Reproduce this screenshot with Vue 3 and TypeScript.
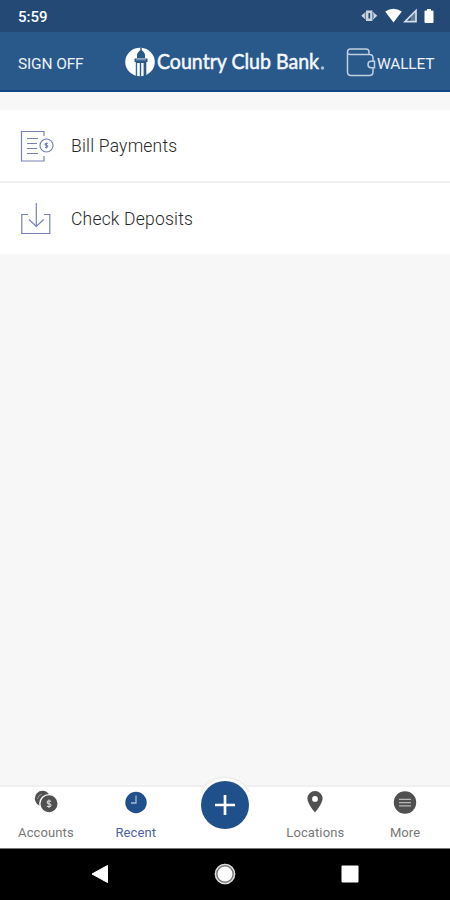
<script setup lang="ts">
import { ref } from 'vue'

type Tab = 'accounts' | 'recent' | 'locations' | 'more'
const activeTab = ref<Tab>('recent')
</script>

<template>
  <div class="screen">
    <div class="status">
      <span class="time">5:59</span>
      <svg class="status-icons" width="78" height="18" viewBox="0 0 78 18">
        <path d="M5 2.500h6.500v10.500H5zM4.500 4L.2 7.700l4.300 3.800zM12 4l4.300 3.700L12 11.500z" fill="#cbd5e0" />
        <path d="M8.300 5v5.500" stroke="#234974" stroke-width="1.700" />
        <path d="M4.300 5.500v4.500M12.300 5.500v4.500" stroke="#607b9b" stroke-width=".8" />
        <path d="M24.200 3.400Q32.500 -2 40.800 3.400L32.500 14.500z" fill="#fff" />
        <path d="M44 13.700L55 2.500v11.200z" fill="none" stroke="#d5dde7" stroke-width="1.700" />
        <path d="M49.500 13.500V8L55 2.500v11z" fill="#d5dde7" opacity=".35" />
        <path d="M66 1h4v1.500h1.500q1 0 1 1v10.500q0 1-1 1h-7q-1 0-1-1V3.500q0-1 1-1H66z" fill="#fff" />
      </svg>
    </div>

    <header class="header">
      <span class="sign-off">SIGN OFF</span>
      <svg class="logo" width="204" height="34" viewBox="0 0 204 34">
        <ellipse cx="17" cy="17" rx="14.800" ry="14.300" fill="#fff" />
        <path d="M18 3v4" stroke="#29588b" stroke-width="1.500" />
        <path d="M14 13v-2.500q0-3.500 4-5.500q4 2 4 5.500V13z" fill="#29588b" />
        <path d="M11.500 13.500h13V17h-1.200v14h-2.700V18h-1.800v13.400h-2V18h-2v13.400h-2V17h-1.300z" fill="#29588b" />
        <path d="M14.500 18v13M18.700 18v13" stroke="#dfe8f1" stroke-width="1.200" />
        <path d="M13 14.800h10" stroke="#a9bfd6" stroke-width=".8" />
        <text class="wordmark" x="34" y="23.500" textLength="162" lengthAdjust="spacingAndGlyphs">Country Club Bank</text>
        <circle cx="199.500" cy="23" r="1.700" fill="#adc0d6" />
      </svg>
      <div class="wallet">
        <svg width="30" height="30" viewBox="0 0 30 30" fill="none" stroke="#c0cfdf" stroke-width="1.500">
          <path d="M23 6.500V4q0-3-3-3H4.500Q1.500 1 1.500 4v20q0 3.500 3.500 3.500h18.500q3.500 0 3.500-3.500v-4M1.500 4.500q0 2 3 2h19q3.500 0 3.500 3.500v3" />
          <path d="M28.500 13.300h-3.500q-3 0-3 3.200t3 3.200h3.500z" />
        </svg>
        <span class="wallet-label">WALLET</span>
      </div>
    </header>

    <main class="content">
      <div class="row">
        <svg width="36" height="34" viewBox="0 0 36 34" fill="none" stroke="#7783b2" stroke-width="1.200">
          <path d="M25 7V2.500H2.500v29.500H25V27" />
          <path d="M8 9.500h11M8 14.500h10M8 19.500h10M8 24.500h11" />
          <circle cx="27.500" cy="16.500" r="6.500" />
          <path d="M28.800 14.300h-1.500q-1.300 0-1.300 1t1.300 1h.2q1.300 0 1.300 1t-1.300 1.200H26M27.400 13.500v6" />
        </svg>
        <span class="row-label bills">Bill Payments</span>
      </div>
      <div class="row">
        <svg width="36" height="34" viewBox="0 0 36 34" fill="none" stroke="#7783b2" stroke-width="1.200">
          <path d="M9 12.500H2.800v19h28v-19H25" />
          <path d="M17.300 1v23.500M10 17.500l7.300 7 7.300-7" />
        </svg>
        <span class="row-label checks">Check Deposits</span>
      </div>
    </main>

    <nav class="tabs">
      <div class="tab" :class="{ active: activeTab === 'accounts' }" @click="activeTab = 'accounts'">
        <svg width="26" height="24" viewBox="0 0 26 24">
          <circle cx="9.500" cy="8.500" r="7.700" fill="#505050" />
          <path d="M4.500 9q.4-4 4.500-4.800" fill="none" stroke="#999" stroke-width="1" />
          <circle cx="16" cy="13.800" r="9.900" fill="#fff" />
          <circle cx="16" cy="13.800" r="8.500" fill="#505050" />
          <path d="M18 11.700q-.8-.9-2-.9-1.800 0-1.800 1.400t1.800 1.500q2 .1 2 1.600t-2 1.500q-1.300 0-2.100-.9M16 9.500v8.600" fill="none" stroke="#ddd" stroke-width="1.100" />
        </svg>
        <span class="tab-label accounts">Accounts</span>
      </div>
      <div class="tab" :class="{ active: activeTab === 'recent' }" @click="activeTab = 'recent'">
        <svg width="26" height="24" viewBox="0 0 26 24">
          <circle cx="13" cy="12.500" r="10.700" fill="#20508b" />
          <path d="M13 5.500v7.500H8" fill="none" stroke="#a7bad2" stroke-width="1.300" />
        </svg>
        <span class="tab-label recent">Recent</span>
      </div>
      <div class="tab add">
        <svg width="60" height="60" viewBox="0 0 60 60">
          <path d="M6 16.500A27.300 27.300 0 0 1 54 16.500" fill="#fff" stroke="#ececec" stroke-width="1.500" />
          <circle cx="30" cy="30" r="26.500" fill="#fff" />
          <circle cx="30" cy="30" r="24" fill="#20508b" />
          <path d="M20 30h20M30 20v20" stroke="#fff" stroke-width="2.700" />
        </svg>
      </div>
      <div class="tab" :class="{ active: activeTab === 'locations' }" @click="activeTab = 'locations'">
        <svg width="26" height="24" viewBox="0 0 26 24">
          <path fill-rule="evenodd" d="M13 1a7.600 7.600 0 0 0-7.600 7.600c0 5 7.600 14 7.600 14s7.600-9 7.600-14A7.600 7.600 0 0 0 13 1zm0 5a2.900 2.900 0 1 1 0 5.800A2.900 2.900 0 0 1 13 6z" fill="#505050" />
        </svg>
        <span class="tab-label locations">Locations</span>
      </div>
      <div class="tab" :class="{ active: activeTab === 'more' }" @click="activeTab = 'more'">
        <svg width="26" height="24" viewBox="0 0 26 24">
          <circle cx="13" cy="12.500" r="11.200" fill="#505050" />
          <path d="M7 9.300h12M7 12.700h12M7 15.900h12" stroke="#b8b8b8" stroke-width="1.300" />
        </svg>
        <span class="tab-label more">More</span>
      </div>
    </nav>

    <div class="system">
      <svg width="20" height="24" viewBox="0 0 20 24"><path d="M17.500 3.500v17L2 12z" fill="#fff" stroke="#fff" stroke-linejoin="round" /></svg>
      <svg width="24" height="24" viewBox="0 0 24 24">
        <circle cx="12" cy="12" r="10.300" fill="#777" />
        <circle cx="12" cy="12" r="9.600" fill="none" stroke="#ddd" stroke-width="1.400" />
        <circle cx="12" cy="12" r="7.500" fill="#fff" />
      </svg>
      <svg width="20" height="24" viewBox="0 0 20 24"><rect x="1.500" y="3.500" width="17" height="17" rx="1" fill="#fff" /></svg>
    </div>
  </div>
</template>

<style>
body { background: #f7f7f7; }
</style>

<style scoped>
.screen {
  display: flex;
  flex-direction: column;
  width: 450px;
  height: 900px;
  overflow: hidden;
  background: #f7f7f7;
  font-family: Roboto, sans-serif;
  color: #292929;
}
svg { display: block; flex: none; }
.status {
  display: flex;
  flex: none;
  box-sizing: border-box;
  justify-content: space-between;
  height: 32px;
  padding: 8px 11px 0 18px;
  background: #234974;
}
.time {
  color: #fff;
  font-size: 15px;
  line-height: 18px;
  font-weight: 500;
}
.header {
  display: grid;
  flex: none;
  box-sizing: border-box;
  grid-template-columns: 105px 204px 1fr;
  height: 60px;
  padding: 0 0 0 18px;
  border-bottom: 2px solid #114482;
  background: #29588b;
  color: #edf2f7;
}
.sign-off {
  padding-top: 22px;
  font-size: 15.500px;
  line-height: 20px;
  letter-spacing: -.15px;
}
.logo { margin-top: 13px; }
.wordmark {
  fill: #f5f8fb;
  stroke: #f5f8fb;
  stroke-width: .5px;
  font-family: Lato, sans-serif;
  font-size: 20.500px;
  font-weight: 400;
}
.wallet {
  display: flex;
  align-items: flex-start;
  padding: 16px 0 0 19px;
}
.wallet-label {
  margin: 5.500px 0 0 1px;
  font-size: 15.500px;
  line-height: 20px;
  letter-spacing: -.2px;
}
.content {
  flex: 1;
  padding-top: 18px;
}
.row {
  display: flex;
  align-items: center;
  gap: 16px;
  height: 71px;
  padding-left: 19px;
  background: #fff;
}
.row + .row { border-top: 2px solid #f1f1f1; }
.row-label {
  font-size: 17.500px;
  font-weight: 300;
  line-height: 24px;
  letter-spacing: .2px;
}
.tabs {
  display: flex;
  flex: none;
  box-sizing: border-box;
  height: 64px;
  padding-left: 1px;
  border-top: 2px solid #f0f0f0;
  border-bottom: 1px solid #777;
  background: #fff;
}
.tab {
  display: flex;
  flex: 1;
  flex-direction: column;
  align-items: center;
  padding-top: 3px;
  color: #777;
}
.tab.active { color: #4d61a0; }
.tab-label {
  margin-top: 11px;
  font-size: 13px;
  line-height: 16px;
  letter-spacing: .1px;
}
.add { padding: 0; }
.add svg { margin-top: -12px; }
.system {
  display: flex;
  flex: none;
  box-sizing: border-box;
  justify-content: space-between;
  height: 51px;
  padding: 13px 90px 0;
  background: #000;
}
</style>
